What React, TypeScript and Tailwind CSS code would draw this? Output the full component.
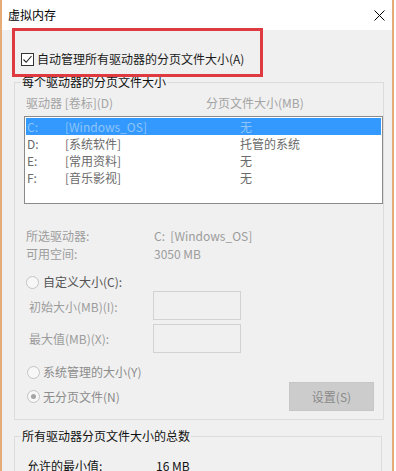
import React from "react";

const font = { fontFamily: '"Noto Sans CJK SC", "Noto Sans", sans-serif' };

function Radio({ checked }: { checked?: boolean }) {
  return (
    <span className="flex h-[13px] w-[13px] shrink-0 items-center justify-center rounded-full border border-[#c4c4c4] bg-[#f7f7f7]">
      {checked && <span className="h-[5px] w-[5px] rounded-full bg-[#a5a5a5]" />}
    </span>
  );
}

const rows = [
  { d: "C:", l: "[Windows_OS]", s: "无", sel: true },
  { d: "D:", l: "[系统软件]", s: "托管的系统" },
  { d: "E:", l: "[常用资料]", s: "无" },
  { d: "F:", l: "[音乐影视]", s: "无" },
];

export default function App() {
  return (
    <div className="h-[471px] w-[396px] overflow-hidden bg-white text-[12px] leading-[16px]" style={font}>
      <div className="relative flex h-[471px] w-[394px] flex-col border-x-2 border-[#e6ac77] bg-[#f0f0f0]">
        {/* title bar */}
        <div className="flex h-[30px] shrink-0 items-center justify-between bg-white pl-[6px] pr-[7px]">
          <span className="text-[12px] text-black">虚拟内存</span>
          <svg width="11" height="11" viewBox="0 0 11 11" className="text-black">
            <path d="M0.5 0.5 L10.5 10.5 M10.5 0.5 L0.5 10.5" stroke="currentColor" strokeWidth="1" />
          </svg>
        </div>

        {/* red highlight */}
        <div className="pointer-events-none absolute left-[10px] top-[28px] z-10 h-[49px] w-[251px] border-[3px] border-[#df3a40]" />

        {/* checkbox row */}
        <div className="mt-[21px] flex h-[16px] items-center pl-[19px]">
          <span className="flex h-[13px] w-[13px] items-center justify-center border border-[#333333] bg-white">
            <svg width="11" height="11" viewBox="0 0 11 11">
              <path d="M1.5 5.5 L4.2 8.3 L9.5 2" fill="none" stroke="#222" strokeWidth="1.1" />
            </svg>
          </span>
          <span className="ml-[3px] text-[#1a1a1a]">自动管理所有驱动器的分页文件大小(A)</span>
        </div>

        {/* group 1 */}
        <fieldset className="ml-[12px] mt-[7px] h-[346px] w-[368px] shrink-0 border border-[#dcdcdc] p-0">
          <legend className="ml-[6px] px-[1px] text-[#111]">每个驱动器的分页文件大小</legend>
          <div className="mt-[5px] flex pl-[11px] text-[#a3a3a3]">
            <span className="w-[180px]">驱动器 [卷标](D)</span>
            <span>分页文件大小(MB)</span>
          </div>
          <div className="ml-[9px] mt-[5px] h-[88px] w-[359px] border border-[#8a8a8a] bg-white p-[1px]">
            {rows.map((r) => (
              <div
                key={r.d}
                className={
                  "flex h-[17px] items-center pl-[1px] " +
                  (r.sel ? "bg-[#3399ff] text-[#8ec4f7]" : "text-[#6a6a6a]")
                }
              >
                <span className="w-[38px]">{r.d}</span>
                <span className="w-[175px]">{r.l}</span>
                <span>{r.s}</span>
              </div>
            ))}
          </div>

          <div className="mt-[24px] flex pl-[11px] text-[#9c9c9c]">
            <span className="w-[128px]">所选驱动器:</span>
            <span>C:&nbsp;&nbsp;[Windows_OS]</span>
          </div>
          <div className="mt-[2px] flex pl-[11px] text-[#9c9c9c]">
            <span className="w-[128px]">可用空间:</span>
            <span>3050 MB</span>
          </div>

          <div className="mt-[12px] flex h-[16px] items-center pl-[11px]">
            <Radio />
            <span className="ml-[4px] text-[#555555]">自定义大小(C):</span>
          </div>

          <div className="mt-[1px] flex items-center pl-[14px] text-[#9c9c9c]">
            <span className="w-[124px] pt-[3px]">初始大小(MB)(I):</span>
            <span className="h-[29px] w-[88px] border border-[#d2d2d2] bg-[#f0f0f0]" />
          </div>
          <div className="mt-[4px] flex items-center pl-[14px] text-[#9c9c9c]">
            <span className="w-[124px]">最大值(MB)(X):</span>
            <span className="h-[29px] w-[88px] border border-[#d2d2d2] bg-[#f0f0f0]" />
          </div>

          <div className="mt-[11px] flex h-[16px] items-center pl-[12px]">
            <Radio />
            <span className="ml-[3px] text-[#8c8c8c]">系统管理的大小(Y)</span>
          </div>

          <div className="mt-[2px] flex h-[29px] items-center justify-between pl-[12px] pr-[9px]">
            <div className="flex items-center">
              <Radio checked />
              <span className="ml-[3px] text-[#8c8c8c]">无分页文件(N)</span>
            </div>
            <div className="flex h-[29px] w-[85px] items-center justify-center border border-[#c6c6c6] bg-[#cccccc] text-[#8a8a8a]">
              设置(S)
            </div>
          </div>
        </fieldset>

        {/* group 2 */}
        <fieldset className="ml-[12px] mt-[8px] h-[80px] w-[368px] shrink-0 border border-[#dcdcdc] p-0">
          <legend className="ml-[6px] px-[1px] text-[#111]">所有驱动器分页文件大小的总数</legend>
          <div className="mt-[14px] flex pl-[12px] text-[#111]">
            <span className="w-[129px]">允许的最小值:</span>
            <span>16 MB</span>
          </div>
        </fieldset>
      </div>
    </div>
  );
}
